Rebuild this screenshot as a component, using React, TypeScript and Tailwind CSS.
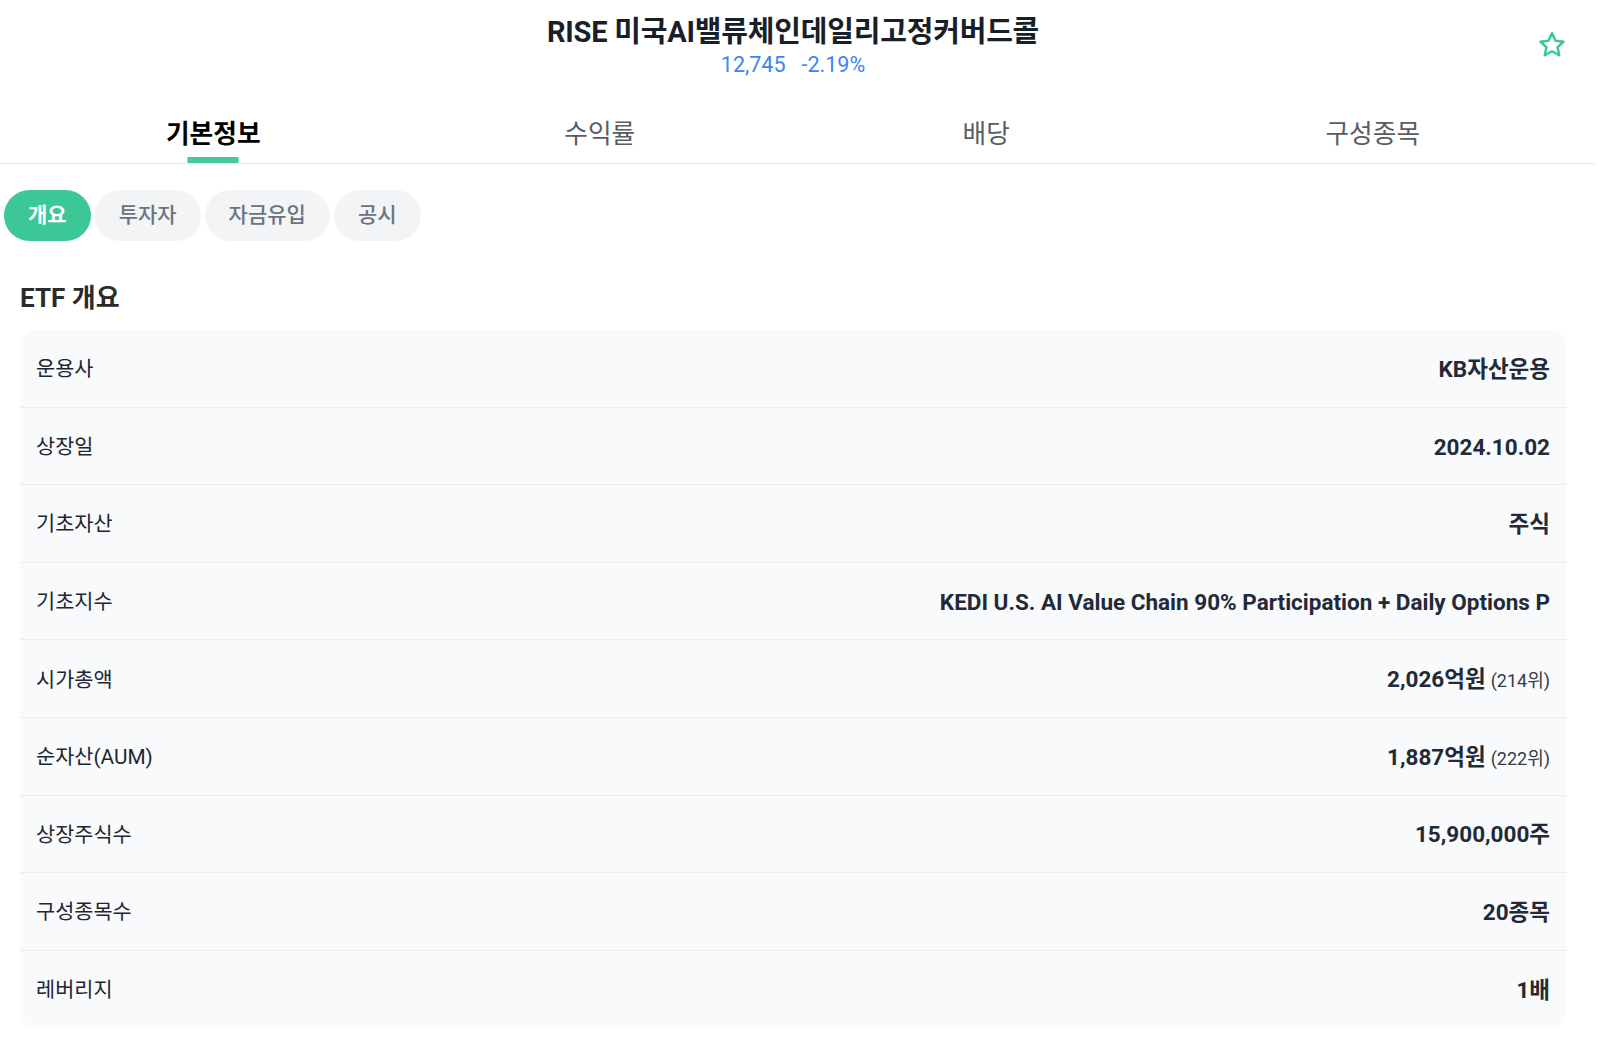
import { useState } from "react";

const tabs = ["기본정보", "수익률", "배당", "구성종목"];
const pills = ["개요", "투자자", "자금유입", "공시"];

const rows: { label: string; value: string; rank?: string }[] = [
  { label: "운용사", value: "KB자산운용" },
  { label: "상장일", value: "2024.10.02" },
  { label: "기초자산", value: "주식" },
  { label: "기초지수", value: "KEDI U.S. AI Value Chain 90% Participation + Daily Options P" },
  { label: "시가총액", value: "2,026억원", rank: "(214위)" },
  { label: "순자산(AUM)", value: "1,887억원", rank: "(222위)" },
  { label: "상장주식수", value: "15,900,000주" },
  { label: "구성종목수", value: "20종목" },
  { label: "레버리지", value: "1배" },
];

function StarIcon() {
  return (
    <svg width="32" height="32" viewBox="0 0 24 24" fill="none">
      <path
        d="M12 3.2l2.6 5.6 6.1.7-4.5 4.2 1.2 6-5.4-3-5.4 3 1.2-6-4.5-4.2 6.1-.7z"
        stroke="#3cc796"
        strokeWidth="1.9"
        strokeLinejoin="round"
      />
    </svg>
  );
}

export default function App() {
  const [tab, setTab] = useState(0);
  const [pill, setPill] = useState(0);

  return (
    <div className="bg-white min-h-[1045px] font-['Roboto','Noto_Sans_CJK_KR',sans-serif]">
      {/* header */}
      <div className="relative w-[1586px] h-[103px] pt-[14px] flex flex-col items-center">
        <h1 className="text-[29px] leading-[36px] font-bold text-[#191f28] tracking-[-0.2px]">
          RISE 미국AI밸류체인데일리고정커버드콜
        </h1>
        <div className="flex gap-[16px] text-[21.5px] leading-[29px] text-[#3a86f2]">
          <span>12,745</span>
          <span>-2.19%</span>
        </div>
        <button className="absolute top-[29px] right-[18px]">
          <StarIcon />
        </button>
      </div>

      {/* tabs */}
      <div className="w-[1595px] border-b border-[#e8e8e8]">
        <div className="w-[1586px] px-5 grid grid-cols-4 h-[60px]">
          {tabs.map((t, i) => (
            <button
              key={t}
              onClick={() => setTab(i)}
              className={
                i === tab
                  ? "relative flex items-center justify-center pt-[3px] text-[25.7px] font-bold text-black"
                  : "relative flex items-center justify-center pt-[3px] text-[25.7px] text-[#585c63]"
              }
            >
              {t}
              {i === tab && (
                <span className="absolute bottom-0 left-1/2 -translate-x-1/2 w-[51px] h-[6px] bg-[#45c99c]" />
              )}
            </button>
          ))}
        </div>
      </div>

      <div className="w-[1586px]">
        {/* sub tabs */}
        <div className="flex gap-1 pl-1 mt-[26px]">
          {pills.map((p, i) => (
            <button
              key={p}
              onClick={() => setPill(i)}
              className={
                i === pill
                  ? "h-[51px] px-6 rounded-full bg-[#3cc796] text-white text-[21px] font-bold"
                  : "h-[51px] px-6 rounded-full bg-[#f2f4f6] text-[#6b7280] text-[21px] font-medium"
              }
            >
              {p}
            </button>
          ))}
        </div>

        <h2 className="mt-[41px] h-[32px] leading-[32px] px-5 text-[26px] font-bold text-[#2b2b2b]">
          ETF 개요
        </h2>

        <div className="mx-5 mt-[16px] rounded-2xl bg-[#f9fafb] overflow-hidden">
          {rows.map((r, i) => (
            <div
              key={r.label}
              className={
                i === rows.length - 1
                  ? "h-[77.6px] flex items-center justify-between px-4 pt-[3px]"
                  : "h-[77.6px] flex items-center justify-between px-4 pt-[3px] border-b border-[#eaecee]"
              }
            >
              <span className="text-[20.8px] text-[#1f2633] whitespace-nowrap">{r.label}</span>
              <span className="text-[22.5px] font-bold text-[#222a38] whitespace-nowrap">
                {r.value}
                {r.rank && <span className="ml-[5px] text-[18px] font-normal text-[#333a46]">{r.rank}</span>}
              </span>
            </div>
          ))}
        </div>
      </div>
    </div>
  );
}
